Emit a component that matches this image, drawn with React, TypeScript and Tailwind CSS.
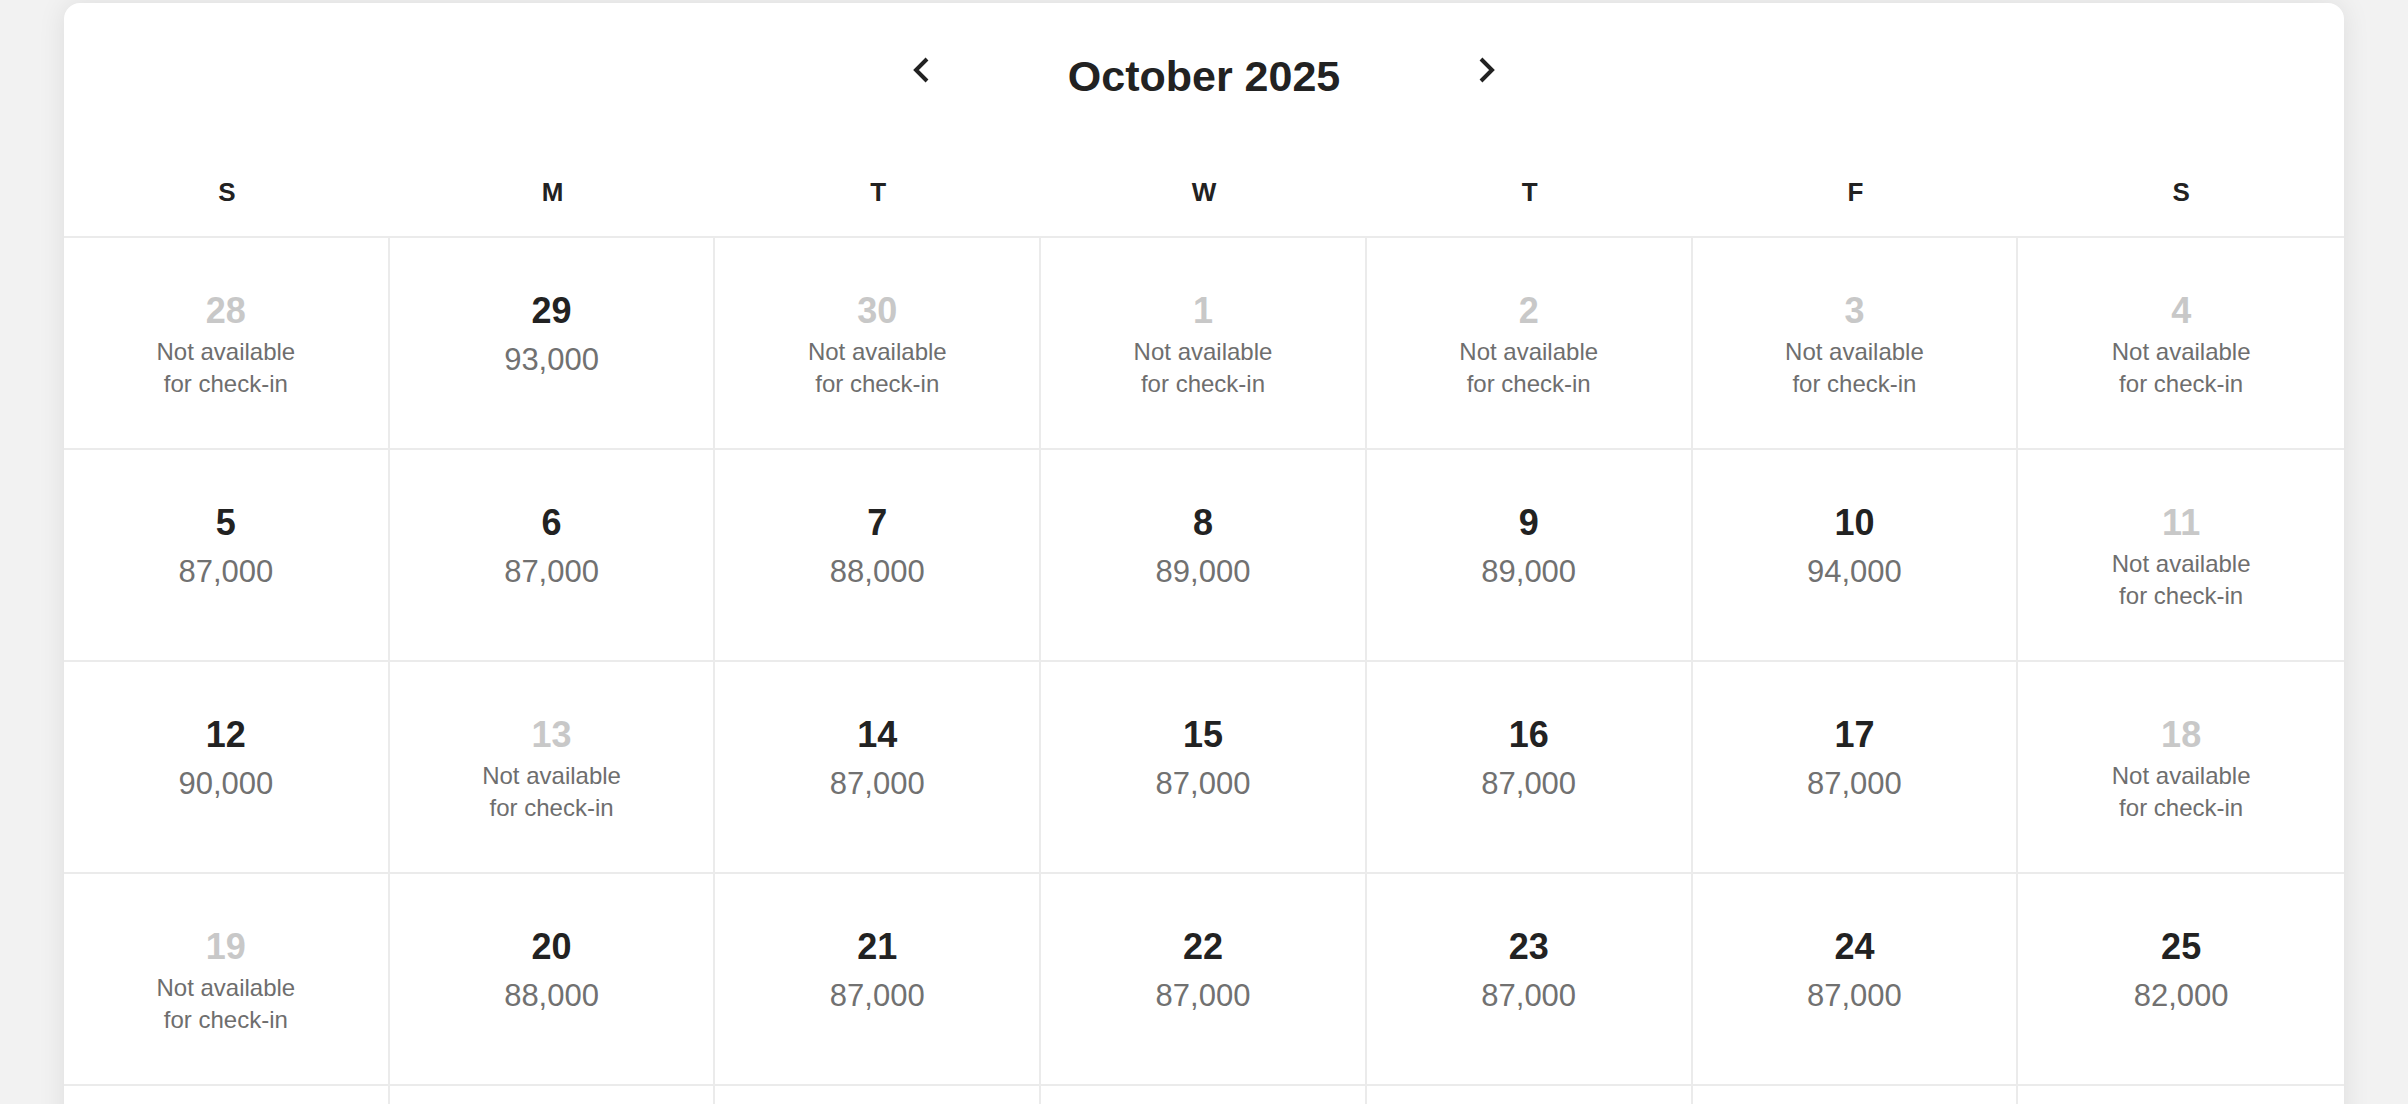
import React from 'react';

interface Day {
    day: number;
    price?: string;
}

const weekdays = ['S', 'M', 'T', 'W', 'T', 'F', 'S'];

// price missing = not available for check-in
const weeks: Day[][] = [
    [{ day: 28 }, { day: 29, price: '93,000' }, { day: 30 }, { day: 1 }, { day: 2 }, { day: 3 }, { day: 4 }],
    [
        { day: 5, price: '87,000' },
        { day: 6, price: '87,000' },
        { day: 7, price: '88,000' },
        { day: 8, price: '89,000' },
        { day: 9, price: '89,000' },
        { day: 10, price: '94,000' },
        { day: 11 },
    ],
    [
        { day: 12, price: '90,000' },
        { day: 13 },
        { day: 14, price: '87,000' },
        { day: 15, price: '87,000' },
        { day: 16, price: '87,000' },
        { day: 17, price: '87,000' },
        { day: 18 },
    ],
    [
        { day: 19 },
        { day: 20, price: '88,000' },
        { day: 21, price: '87,000' },
        { day: 22, price: '87,000' },
        { day: 23, price: '87,000' },
        { day: 24, price: '87,000' },
        { day: 25, price: '82,000' },
    ],
];

function Chevron({ dir }: { dir: 'left' | 'right' }) {
    return (
        <svg width="18" height="26" viewBox="0 0 18 26" fill="none">
            <polyline
                points={dir === 'left' ? '15,2 4,13 15,24' : '3,2 14,13 3,24'}
                stroke="#222222"
                strokeWidth="4"
                strokeLinejoin="miter"
            />
        </svg>
    );
}

function DayCell({ item, last }: { item?: Day; last: boolean }) {
    const available = !!item?.price;
    return (
        <div
            className={`h-[212px] border-b-2 border-[#ebebeb] flex flex-col items-center pt-[53px] ${last ? '' : 'border-r-2'}`}
        >
            {item && (
                <>
                    <div
                        className={`text-[36px] leading-[40px] font-bold ${available ? 'text-[#222222]' : 'text-[#c8c8c8]'}`}
                    >
                        {item.day}
                    </div>
                    {available ? (
                        <div className="mt-[11px] text-[31px] leading-[36px] text-[#717171]">{item.price}</div>
                    ) : (
                        <div className="mt-[5px] text-[24px] leading-[32px] text-[#6e6e6e] text-center">
                            Not available
                            <br />
                            for check-in
                        </div>
                    )}
                </>
            )}
        </div>
    );
}

export default function App() {
    return (
        <div
            className="h-[1104px] overflow-hidden bg-[#f2f2f2] pt-[3px] px-[64px]"
            style={{ fontFamily: '"Liberation Sans", Arial, sans-serif' }}
        >
            <div className="bg-white rounded-2xl shadow-[0_0_28px_rgba(0,0,0,0.09)]">
                {/* Month nav */}
                <div className="h-[145px] flex items-center justify-center gap-[138px]">
                    <button className="-mt-3 flex items-center">
                        <Chevron dir="left" />
                    </button>
                    <h2 className="text-[43px] leading-[52px] font-bold text-[#222222]">October 2025</h2>
                    <button className="-mt-3 flex items-center">
                        <Chevron dir="right" />
                    </button>
                </div>

                {/* Weekdays */}
                <div className="grid grid-cols-7 h-[90px] border-b-2 border-[#ebebeb]">
                    {weekdays.map((w, i) => (
                        <div key={i} className="flex items-center justify-center text-[26px] font-bold text-[#222222]">
                            {w}
                        </div>
                    ))}
                </div>

                {/* Days */}
                <div className="grid grid-cols-7">
                    {weeks.map((week, wi) =>
                        week.map((item, di) => <DayCell key={`${wi}-${di}`} item={item} last={di === 6} />)
                    )}
                    {/* next week row, below the fold */}
                    {weekdays.map((_, di) => (
                        <DayCell key={`next-${di}`} last={di === 6} />
                    ))}
                </div>
            </div>
        </div>
    );
}
